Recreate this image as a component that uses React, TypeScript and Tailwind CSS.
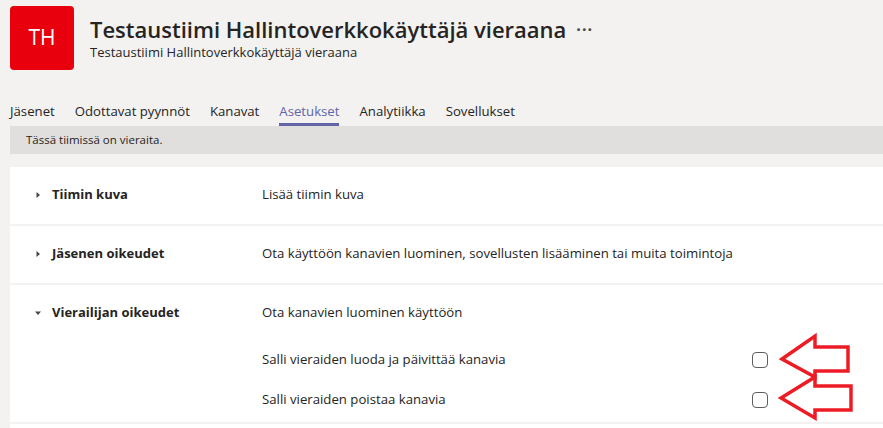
import React from "react";

const font = { fontFamily: '"Open Sans", "Noto Sans", sans-serif' };

function Caret({ open }: { open?: boolean }) {
  return (
    <svg width="8" height="8" viewBox="0 0 8 8" className="shrink-0">
      {open ? <path d="M1 2.5h6L4 6z" fill="#484644" /> : <path d="M2.5 1v6L6 4z" fill="#484644" />}
    </svg>
  );
}

function Checkbox() {
  return <span className="block h-4 w-4 rounded-[4px] border-[1.5px] border-[#605e5c] bg-white" />;
}

function Row({ label, desc, open, children }: { label: string; desc: string; open?: boolean; children?: React.ReactNode }) {
  return (
    <div className="bg-white">
      <div className="flex h-[57px] items-start pt-[17px]">
        <div className="flex w-[252px] items-center gap-[10px] pl-[24px] pt-[1px]">
          <Caret open={open} />
          <span className="text-[13px] font-bold text-[#252423]">{label}</span>
        </div>
        <span className="pt-[1px] text-[13.2px] text-[#252423]">{desc}</span>
      </div>
      {children}
    </div>
  );
}

export default function App() {
  return (
    <div className="relative h-[428px] overflow-hidden bg-[#f3f2f1] text-[#252423]" style={font}>
      <header className="flex items-start gap-4 pl-[10px] pt-[6px]">
        <div className="flex h-16 w-16 items-center justify-center rounded-[4px] bg-[#e8000d] text-[21px] text-white">TH</div>
        <div className="pt-[9px]">
          <div className="flex items-center gap-[10px]">
            <h1 className="text-[22px] font-semibold leading-[28px] text-[#252423]">Testaustiimi Hallintoverkkokäyttäjä vieraana</h1>
            <span className="text-[16px] font-bold leading-none tracking-[1px] text-[#484644]">···</span>
          </div>
          <p className="mt-[1px] text-[13px] leading-[17px] text-[#252423]">Testaustiimi Hallintoverkkokäyttäjä vieraana</p>
        </div>
      </header>

      <nav className="mt-[30px] flex gap-[20px] pl-[10px] text-[13.2px] text-[#252423]">
        {["Jäsenet", "Odottavat pyynnöt", "Kanavat", "Asetukset", "Analytiikka", "Sovellukset"].map((t) => (
          <span
            key={t}
            className={
              t === "Asetukset"
                ? "border-b-[3px] border-[#6264a7] pb-[1px] leading-[22px] text-[#6264a7]"
                : "border-b-[3px] border-transparent pb-[1px] leading-[22px]"
            }
          >
            {t}
          </span>
        ))}
      </nav>

      <div className="ml-[10px] flex h-[28px] items-center bg-[#e1dfdd] pl-4 text-[11.5px]">Tässä tiimissä on vieraita.</div>

      <div className="ml-[10px] mt-[13px] flex flex-col gap-[2px]">
        <Row label="Tiimin kuva" desc="Lisää tiimin kuva" />
        <Row label="Jäsenen oikeudet" desc="Ota käyttöön kanavien luominen, sovellusten lisääminen tai muita toimintoja" />
        <Row label="Vierailijan oikeudet" desc="Ota kanavien luominen käyttöön" open>
          <div className="flex flex-col pl-[252px] pr-[115px] text-[13.2px]">
            <div className="flex h-10 items-center justify-between pb-[5px]">
              <span>Salli vieraiden luoda ja päivittää kanavia</span>
              <Checkbox />
            </div>
            <div className="flex h-10 items-center justify-between pb-[5px]">
              <span>Salli vieraiden poistaa kanavia</span>
              <Checkbox />
            </div>
          </div>
        </Row>
        <div className="h-10 bg-white" />
      </div>

      <svg className="absolute left-[770px] top-[330px]" width="100" height="95" viewBox="0 0 100 95">
        <g fill="none" stroke="#ed1c24" strokeWidth="3.5" strokeLinejoin="miter">
          <polygon points="12,29 45,6 45,17 78,17 78,41 45,41 45,47" />
          <polygon points="11,68 45,47 45,56 81,56 81,80 45,80 45,88" />
        </g>
      </svg>
    </div>
  );
}
